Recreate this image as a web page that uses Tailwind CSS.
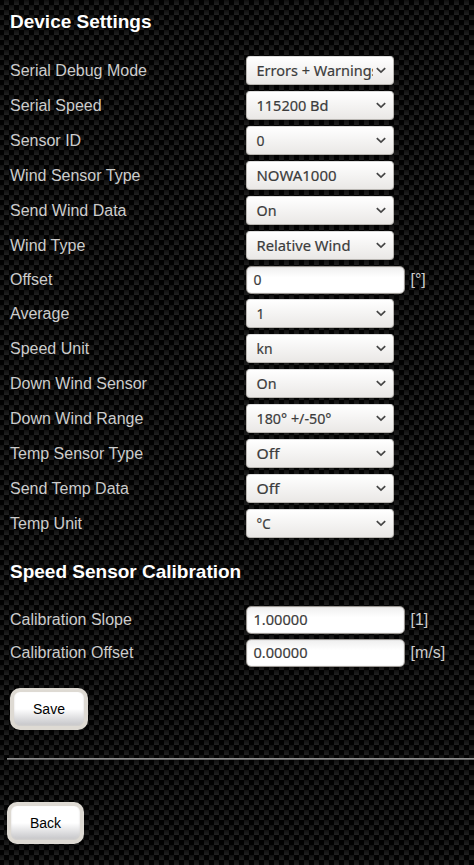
<!DOCTYPE html>
<html lang="en">
<head>
<meta charset="utf-8">
<title>Device Settings</title>
<script src="https://cdn.jsdelivr.net/npm/@tailwindcss/browser@4"></script>
</head>
<body class="h-[865px] overflow-hidden bg-black font-['Liberation_Sans',sans-serif] text-base text-[#cccccc]">
<div id="page" class="flex h-full flex-col bg-[#020202] pt-[9px]">
  <h1 class="h-[44px] pl-[10px] text-[19px] leading-[26px] font-bold text-white">Device Settings</h1>
  <div id="device"></div>
  <h2 class="mt-[18px] h-[44px] pl-[10px] text-[19px] leading-[26px] font-bold text-white">Speed Sensor Calibration</h2>
  <div id="calibration"></div>
  <div class="mt-[19px] pl-[10px]"><button class="block h-[42px] w-[78px] rounded-[10px] border-4 border-[#dedad3] bg-linear-to-b from-white from-50% to-[#c4c4c7] text-[14px] text-black shadow-[inset_0_-1px_2px_#d4d2d0]">Save</button></div>
  <div class="mt-[28px] ml-[7px] h-[2px] shrink-0 border-t border-b border-t-[#8c8c8c] border-b-[#666666]"></div>
  <div class="mt-[42px] pl-[7px]"><button class="block h-[42px] w-[77px] rounded-[10px] border-4 border-[#dedad3] bg-linear-to-b from-white from-50% to-[#c4c4c7] text-[14px] text-black shadow-[inset_0_-1px_2px_#d4d2d0]">Back</button></div>
</div>
<script>
// 10px checker tile: two 5px squares with a vertical fade
const tile = '<svg xmlns="http://www.w3.org/2000/svg" width="10" height="10" shape-rendering="crispEdges"><defs><linearGradient id="g" x2="0" y2="1"><stop stop-color="#101010"/><stop offset="1" stop-color="#212121"/></linearGradient></defs><path fill="url(#g)" d="M4 0h5v5h-5z"/><path fill="url(#g)" d="M9 5h1v5h-1z"/><path fill="url(#g)" d="M0 5h4v5h-4z"/></svg>';
document.getElementById('page').style.backgroundImage = 'url("data:image/svg+xml,' + encodeURIComponent(tile) + '")';

const text = (v, w, y) => `<text x="0.5" y="${y}" fill="currentColor" stroke="currentColor" stroke-width="0.2" textLength="${w}" lengthAdjust="spacingAndGlyphs">${v}</text>`;
const select = (v, w) => `<div class="flex h-[29px] w-[148px] items-center rounded-[4px] border border-[#b9b6b2] border-t-[#dddddd] bg-linear-to-b from-white to-[#eae8e6] pl-[9px] font-['Noto_Sans',sans-serif] text-[15px] text-[#3c3c3c]"><svg class="mr-[3px] block shrink-0 overflow-hidden" width="117" height="27">${text(v, w, 18.5)}</svg><svg class="shrink-0" width="10" height="7" viewBox="0 0 10 7" fill="none" stroke="#454545" stroke-width="1.7"><path d="M.8 1.2 5 5.2 9.2 1.2"/></svg></div>`;
const input = (v, w) => `<div class="h-[28px] w-[159px] rounded-[5px] border border-[#9b9793] bg-linear-to-b from-[#efefef] to-white to-40% pl-[6px] font-['Noto_Sans',sans-serif] text-[15px] text-[#3c3c3c] shadow-[inset_0_0_1px_#999999]"><svg class="block" width="140" height="26">${text(v, w, 18)}</svg></div>`;
const row = ([label, v, w, unit]) => unit
  ? `<div class="flex h-[33px] items-start pt-[3px]"><div class="w-[236px] leading-[28px]">${label}</div>${input(v, w)}<div class="pl-[5.5px] leading-[28px]">${unit}</div></div>`
  : `<div class="flex h-[35px] items-start pt-[3px]"><div class="w-[236px] leading-[30px]">${label}</div>${select(v, w)}</div>`;
for (const [id, rows] of Object.entries({
  device: [['Serial Debug Mode','Errors + Warnings',122],['Serial Speed','115200 Bd',72],['Sensor ID','0',8],['Wind Sensor Type','NOWA1000',80],['Send Wind Data','On',20],['Wind Type','Relative Wind',94],['Offset','0',8,'[°]'],['Average','1',8],['Speed Unit','kn',16],['Down Wind Sensor','On',20],['Down Wind Range','180° +/-50°',75],['Temp Sensor Type','Off',23],['Send Temp Data','Off',23],['Temp Unit','°C',14]],
  calibration: [['Calibration Slope','1.00000',54,'[1]'],['Calibration Offset','0.00000',54,'[m/s]']]
})) {
  const el = document.getElementById(id);
  el.className = 'pl-[10px]';
  el.innerHTML = rows.map(row).join('');
}
</script>
</body>
</html>
